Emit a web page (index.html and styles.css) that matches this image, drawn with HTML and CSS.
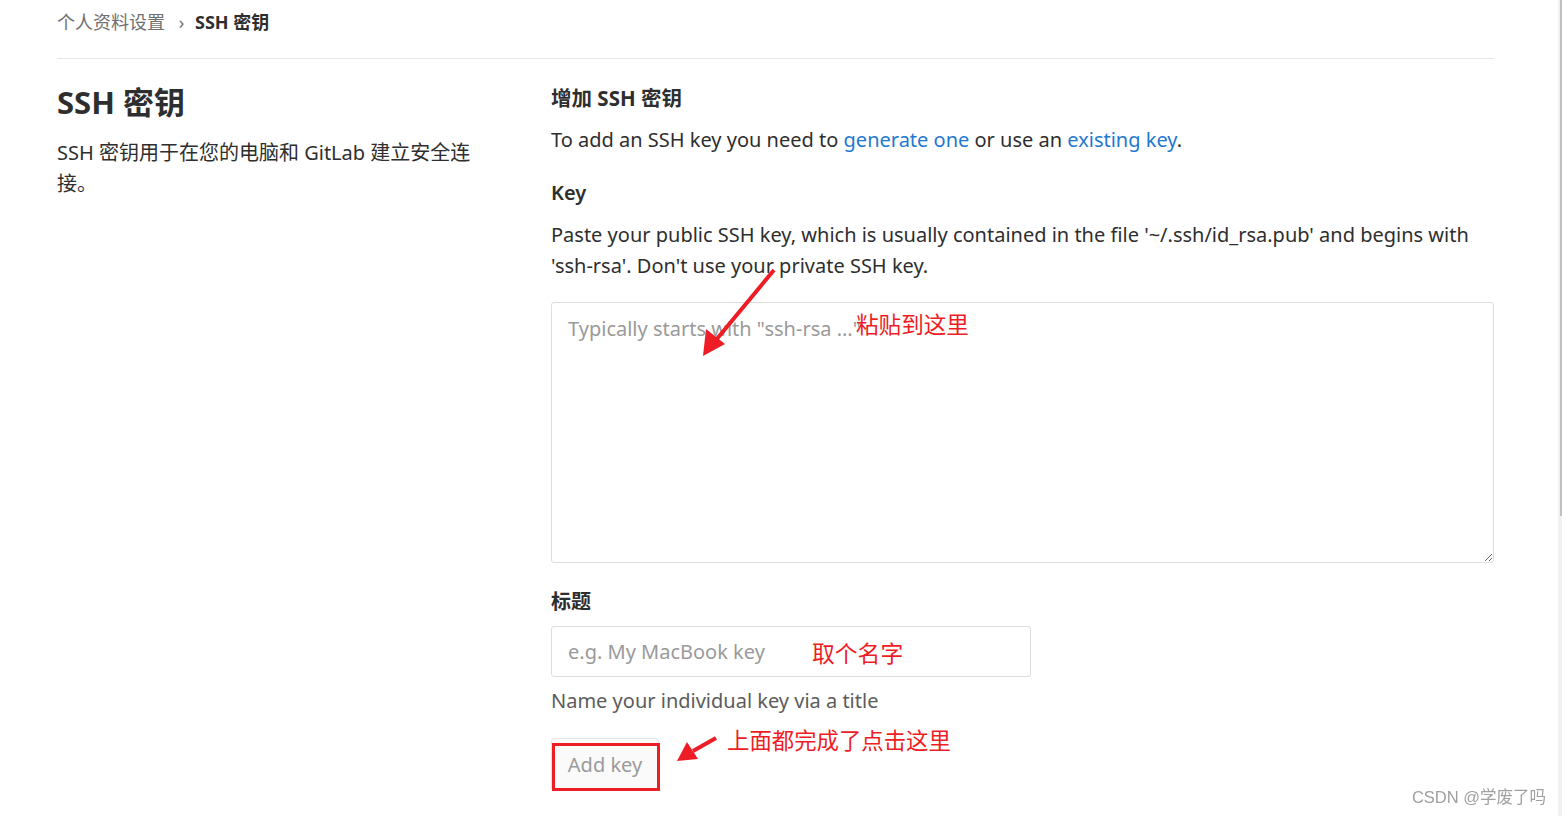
FILE: index.html
```html
<!DOCTYPE html>
<html lang="zh-CN">
<head>
    <meta charset="UTF-8">
    <title>SSH 密钥 - 个人资料设置</title>
    <link rel="stylesheet" href="styles.css">
</head>
<body>
    <div class="page">
        <div class="breadcrumb">
            <a href="#">个人资料设置</a>
            <span class="sep">›</span>
            <strong>SSH 密钥</strong>
        </div>

        <div class="row">
            <div class="col-left">
                <h3 class="page-title">SSH 密钥</h3>
                <p class="lead">SSH 密钥用于在您的电脑和 GitLab 建立安全连接。</p>
            </div>

            <div class="col-right">
                <h4 class="form-title">增加 SSH 密钥</h4>
                <p class="intro">To add an SSH key you need to <a href="#">generate one</a> or use an <a href="#">existing key</a>.</p>

                <label class="field-label">Key</label>
                <p class="help">Paste your public SSH key, which is usually contained in the file '~/.ssh/id_rsa.pub' and begins with 'ssh-rsa'. Don't use your private SSH key.</p>
                <div class="note-wrap">
                    <textarea class="key-box" placeholder="Typically starts with &quot;ssh-rsa ...&quot;"></textarea>
                    <span class="note note-paste">粘贴到这里</span>
                </div>

                <label class="field-label title-label">标题</label>
                <div class="note-wrap">
                    <input type="text" class="title-input" placeholder="e.g. My MacBook key">
                    <span class="note note-name">取个名字</span>
                </div>
                <p class="help title-help">Name your individual key via a title</p>

                <div class="actions">
                    <button class="btn-add">Add key</button>
                    <span class="mark-box"></span>
                    <span class="note note-submit">上面都完成了点击这里</span>
                </div>
            </div>
        </div>
    </div>

    <svg class="arrows" width="1562" height="816">
        <line x1="774" y1="270" x2="716" y2="340" stroke="#ee1c25" stroke-width="4"/>
        <polygon points="703,356 706,329 725,344" fill="#ee1c25"/>
        <line x1="716" y1="738" x2="693" y2="751" stroke="#ee1c25" stroke-width="4"/>
        <polygon points="677,761 687,742 698,759" fill="#ee1c25"/>
    </svg>

    <div class="scrollbar"><div class="thumb"></div></div>
    <div class="watermark">CSDN @学废了吗</div>
</body>
</html>
```

FILE: styles.css
```css
body {
    margin: 0;
    background: #fff;
    color: #2e2e2e;
    font-family: "Noto Sans", "Noto Sans CJK SC", sans-serif;
    font-size: 20px;
}
a {
    color: #1f78d1;
    text-decoration: none;
}
.page {
    width: 1437px;
    margin-left: 57px;
}
.breadcrumb {
    height: 44px;
    padding-bottom: 14px;
    border-bottom: 1px solid #e5e5e5;
    font-size: 18px;
    line-height: 44px;
}
.breadcrumb a {
    color: #707070;
}
.breadcrumb .sep {
    color: #707070;
    margin: 0 6px 0 9px;
}
.breadcrumb strong {
    color: #2e2e2e;
}
.row {
    display: grid;
    grid-template-columns: 494px 1fr;
}
.col-left {
    width: 440px;
}
.page-title {
    font-size: 31px;
    font-weight: bold;
    margin: 22px 0 14px;
    line-height: 42px;
}
.lead {
    margin: 0;
    line-height: 31px;
}
.form-title {
    font-size: 20.5px;
    font-weight: bold;
    margin: 25px 0 12px;
    line-height: 28px;
}
.intro {
    margin: 0 0 24px;
    line-height: 31px;
}
.field-label {
    display: block;
    font-weight: 600;
    line-height: 28px;
    margin-bottom: 12px;
}
.help {
    margin: 0 0 21px;
    line-height: 31px;
}
.note-wrap {
    position: relative;
}
.key-box {
    display: block;
    box-sizing: border-box;
    width: 100%;
    height: 261px;
    border: 1px solid #dedede;
    border-radius: 3px;
    padding: 12px 16px;
    font-family: inherit;
    font-size: 20px;
    line-height: 28px;
    margin: 0 0 25px;
}
.note {
    position: absolute;
    color: #ee1c25;
    font-family: "Noto Sans CJK SC", sans-serif;
    white-space: nowrap;
}
.note-paste {
    left: 305px;
    top: 5px;
    font-size: 22.6px;
}
.title-label {
    margin-bottom: 10px;
}
.title-input {
    display: block;
    box-sizing: border-box;
    width: 480px;
    height: 51px;
    border: 1px solid #dedede;
    border-radius: 3px;
    padding: 0 16px;
    font-family: inherit;
    font-size: 20px;
}
.note-name {
    left: 261px;
    top: 10px;
    font-size: 22.8px;
}
.title-help {
    color: #5c5c5c;
    margin: 8px 0 22px;
}
.actions {
    position: relative;
}
.btn-add {
    display: block;
    width: 108px;
    height: 53px;
    background: #fafafa;
    border: 1px solid #e5e5e5;
    border-radius: 3px;
    color: #9a9a9a;
    font-family: inherit;
    font-size: 20px;
    padding: 0;
}
.mark-box {
    position: absolute;
    left: 1px;
    top: 5px;
    width: 102px;
    height: 42px;
    border: 3px solid #ee1c25;
}
.note-submit {
    left: 176px;
    top: -15px;
    font-size: 22.4px;
}
::placeholder {
    color: #9a9a9a;
}
.arrows {
    position: absolute;
    left: 0;
    top: 0;
    pointer-events: none;
}
.scrollbar {
    position: fixed;
    right: 0;
    top: 0;
    width: 4px;
    height: 816px;
    background: #f1f1f1;
}
.scrollbar .thumb {
    margin-left: 2px;
    width: 2px;
    height: 516px;
    background: #c1c1c1;
}
.watermark {
    position: fixed;
    right: 16px;
    bottom: 8px;
    color: #a0a0a0;
    font-family: "Liberation Sans", "Noto Sans CJK SC", sans-serif;
    font-size: 16.5px;
}
```
